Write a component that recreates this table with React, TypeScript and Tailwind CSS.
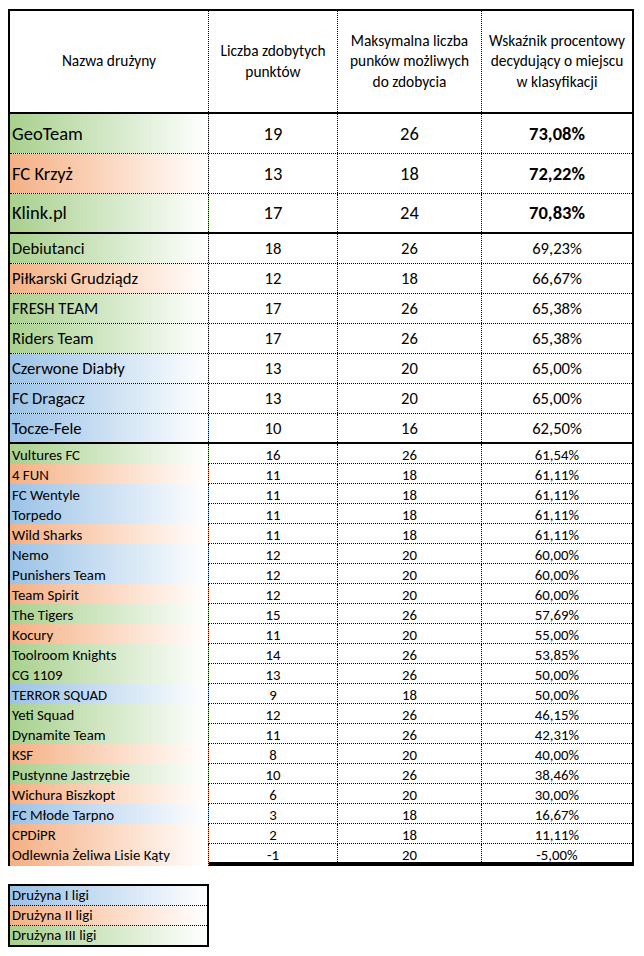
type Tier = 'b' | 'o' | 'g'
type Team = [string, Tier, number, number, string]

const fills: Record<Tier, string> = {
    b: 'bg-linear-to-r from-[#9bc2e6] to-white',
    o: 'bg-linear-to-r from-[#f4b084] to-white',
    g: 'bg-linear-to-r from-[#a9d08e] to-white',
}

const topTeams: Team[] = [
    ['GeoTeam', 'g', 19, 26, '73,08%'],
    ['FC Krzyż', 'o', 13, 18, '72,22%'],
    ['Klink.pl', 'g', 17, 24, '70,83%'],
]

const midTeams: Team[] = [
    ['Debiutanci', 'g', 18, 26, '69,23%'],
    ['Piłkarski Grudziądz', 'o', 12, 18, '66,67%'],
    ['FRESH TEAM', 'g', 17, 26, '65,38%'],
    ['Riders Team', 'g', 17, 26, '65,38%'],
    ['Czerwone Diabły', 'b', 13, 20, '65,00%'],
    ['FC Dragacz', 'b', 13, 20, '65,00%'],
    ['Tocze-Fele', 'b', 10, 16, '62,50%'],
]

const restTeams: Team[] = [
    ['Vultures FC', 'g', 16, 26, '61,54%'],
    ['4 FUN', 'o', 11, 18, '61,11%'],
    ['FC Wentyle', 'b', 11, 18, '61,11%'],
    ['Torpedo', 'b', 11, 18, '61,11%'],
    ['Wild Sharks', 'o', 11, 18, '61,11%'],
    ['Nemo', 'b', 12, 20, '60,00%'],
    ['Punishers Team', 'b', 12, 20, '60,00%'],
    ['Team Spirit', 'o', 12, 20, '60,00%'],
    ['The Tigers', 'g', 15, 26, '57,69%'],
    ['Kocury', 'o', 11, 20, '55,00%'],
    ['Toolroom Knights', 'g', 14, 26, '53,85%'],
    ['CG 1109', 'g', 13, 26, '50,00%'],
    ['TERROR SQUAD', 'b', 9, 18, '50,00%'],
    ['Yeti Squad', 'g', 12, 26, '46,15%'],
    ['Dynamite Team', 'g', 11, 26, '42,31%'],
    ['KSF', 'o', 8, 20, '40,00%'],
    ['Pustynne Jastrzębie', 'g', 10, 26, '38,46%'],
    ['Wichura Biszkopt', 'o', 6, 20, '30,00%'],
    ['FC Młode Tarpno', 'b', 3, 18, '16,67%'],
    ['CPDiPR', 'o', 2, 18, '11,11%'],
    ['Odlewnia Żeliwa Lisie Kąty', 'o', -1, 20, '-5,00%'],
]

const gridCols = 'grid grid-cols-[199px_129px_144px_1fr]'
const sep = 'border-r border-dotted border-black'

function Row({ team, height, size, bold, last }: { team: Team, height: string, size: string, bold?: boolean, last: boolean }) {
    const [name, tier, points, max, pct] = team
    const bottom = last ? 'border-b-2 border-solid border-black' : 'border-b border-dotted border-black'
    return (<div className={`${gridCols} ${height} ${size} ${bottom}`}>
        <div className={`${sep} ${fills[tier]} flex items-center pl-[2px] whitespace-nowrap`}>{name}</div>
        <div className={`${sep} flex items-center justify-center`}>{points}</div>
        <div className={`${sep} flex items-center justify-center`}>{max}</div>
        <div className={`flex items-center justify-center ${bold ? 'font-bold' : ''}`}>{pct}</div>
    </div>)
}

export default function App() {
    return (<div className="min-h-[956px] bg-white text-black font-['Carlito','Calibri','Lato',sans-serif] pt-[9px] pl-[8px]">
        <div className="w-[626px] border-2 border-black">
            {/* Header */}
            <div className={`${gridCols} h-[103px] text-[15.4px] leading-[20.5px] text-center border-b-2 border-black`}>
                <div className={`${sep} flex items-center justify-center`}>Nazwa drużyny</div>
                <div className={`${sep} flex items-center justify-center`}>Liczba zdobytych<br />punktów</div>
                <div className={`${sep} flex items-center justify-center`}>Maksymalna liczba<br />punków możliwych<br />do zdobycia</div>
                <div className="flex items-center justify-center">Wskaźnik procentowy<br />decydujący o miejscu<br />w klasyfikacji</div>
            </div>
            {topTeams.map((t, i) => <Row key={t[0]} team={t} height="h-[40px]" size="text-[18.5px]" bold last={i === topTeams.length - 1} />)}
            {midTeams.map((t, i) => <Row key={t[0]} team={t} height="h-[30px]" size="text-[16.6px]" last={i === midTeams.length - 1} />)}
            {restTeams.map((t, i) => <Row key={t[0]} team={t} height="h-[20px]" size="text-[14.8px]" last={i === restTeams.length - 1} />)}
        </div>

        {/* Legend */}
        <div className="w-[201px] mt-[18px] border-2 border-black text-[14.8px]">
            <div className={`h-[20px] flex items-center pl-[2px] border-b border-dotted border-black ${fills.b}`}>Drużyna I ligi</div>
            <div className={`h-[20px] flex items-center pl-[2px] border-b border-dotted border-black ${fills.o}`}>Drużyna II ligi</div>
            <div className={`h-[19px] flex items-center pl-[2px] ${fills.g}`}>Drużyna III ligi</div>
        </div>
    </div>)
}
